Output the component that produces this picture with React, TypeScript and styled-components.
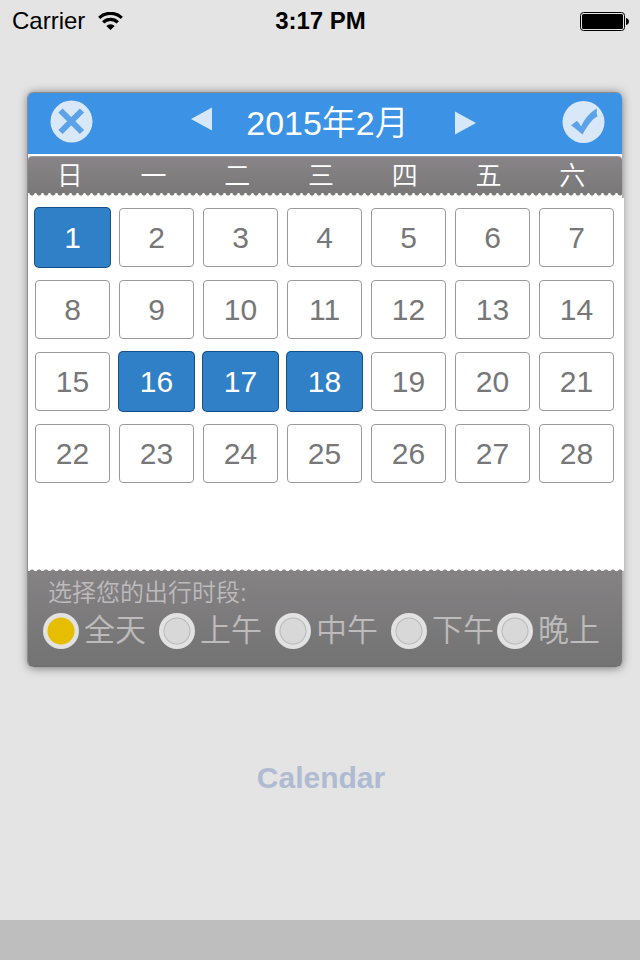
import React, { useState } from "react";
import styled, { createGlobalStyle, css } from "styled-components";

const GlobalStyle = createGlobalStyle`
  *, *::before, *::after { box-sizing: border-box; }
  body {
    margin: 0;
    background: #e4e4e4;
    font-family: "Liberation Sans", "Noto Sans CJK SC", sans-serif;
  }
  button { font: inherit; border: 0; padding: 0; background: none; cursor: pointer; }
`;

const Screen = styled.div`
  display: flex;
  flex-direction: column;
  min-height: 100vh;
`;

const StatusBar = styled.header`
  display: grid;
  grid-template-columns: 1fr auto 1fr;
  align-items: center;
  height: 40px;
  padding: 2px 11px 0 12px;
  font-size: 24px;
  line-height: 28px;
  color: #000;
`;

const Network = styled.div`
  display: flex;
  align-items: center;
  gap: 13px;
`;

const Clock = styled.time`
  font-weight: 700;
`;

const BatteryIcon = styled.svg`
  justify-self: end;
`;

const Main = styled.main`
  flex: 1;
  display: flex;
  flex-direction: column;
  align-items: center;
  padding: 52px 18px 0 28px;
`;

const Card = styled.section`
  width: 100%;
  border-radius: 6px;
  background: #fff;
  border-top: 1px solid #8c8c8c;
  box-shadow: -1px 0 0 #8e8e8c, 0 1px 10px rgba(0, 0, 0, 0.5);
`;

const TitleBar = styled.div`
  display: flex;
  align-items: center;
  justify-content: space-between;
  height: 61px;
  padding: 0 17px 4px 22px;
  border-radius: 5px 5px 0 0;
  background: #3c92e4;
`;

const IconButton = styled.button`
  display: flex;
`;

const MonthNav = styled.div`
  display: flex;
  align-items: center;
  gap: 34px;
  padding-left: 12px;
`;

const NextButton = styled(IconButton)`
  margin-left: 12px;
`;

const Month = styled.h1`
  margin: 0;
  padding-top: 3px;
  font-size: 34px;
  font-weight: 350;
  line-height: 40px;
  color: #fff;
`;

const Weekdays = styled.div`
  display: grid;
  grid-template-columns: repeat(7, 1fr);
  margin-top: 2px;
  padding: 0 8px 0 0;
  height: 37px;
  border-top: 1px solid #a09ea0;
  border-radius: 4px 4px 0 0;
  background: linear-gradient(#888487, #7a7879);
  font-size: 26px;
  font-weight: 350;
  line-height: 38px;
  text-align: center;
  color: #fff;
`;

const LowerScallops = styled.div`
  height: 5px;
  background: radial-gradient(circle at 4px 0, #7a7879 2px, transparent 3px) 0 0 / 7px 3px repeat-x #fcfcfa;
`;

const UpperScallops = styled.div`
  height: 2px;
  background: radial-gradient(circle at 4px 3px, #858284 2px, transparent 3px) 0 0 / 7px 2px repeat-x;
`;

const Body = styled.div`
  margin-right: -2px;
  background: #fff;
`;

const Days = styled.div`
  display: grid;
  grid-template-columns: repeat(7, 1fr);
  gap: 13px 9px;
  padding: 10px 10px 86px 7px;
`;

const Day = styled.button<{ $selected: boolean }>`
  height: 59px;
  border: 1px solid #999;
  border-radius: 4px;
  background: #fff;
  font-size: 30px;
  line-height: 34px;
  color: #777;
  ${(p) =>
    p.$selected &&
    css`
      border-color: #3080c8;
      background: #3080c8;
      box-shadow: 0 0 0 1px #14508c;
      color: #fff;
    `}
`;

const Periods = styled.fieldset`
  margin: 0;
  border: 0;
  min-width: 0;
  padding: 8px 15px 16px;
  border-radius: 0 0 6px 6px;
  background: linear-gradient(#858284, #737373);
  border-bottom: 1px solid #6c6c6c;
  color: #bdbbbc;
  font-weight: 350;
`;

const PeriodsTitle = styled.legend`
  float: left;
  width: 100%;
  padding: 0 0 0 5px;
  font-size: 24px;
  line-height: 28px;
`;

const PeriodList = styled.div`
  clear: both;
  display: grid;
  grid-template-columns: 116fr 116fr 116fr 106fr 110fr;
  padding-top: 5px;
`;

const Period = styled.label`
  display: flex;
  align-items: center;
  gap: 5px;
  height: 38px;
  font-size: 31px;
  line-height: 38px;
  white-space: nowrap;
`;

const Radio = styled.input`
  appearance: none;
  flex: none;
  width: 36px;
  height: 36px;
  margin: 0;
  border-radius: 50%;
  background: radial-gradient(circle, #d8d8d8 12px, #b8b8b8 13px, #e2e2e2 14px);
  &:checked {
    background: radial-gradient(circle, #e6be00 13px, #e2e2e2 14px);
  }
`;

const CalendarButton = styled.button`
  && {
    margin: 93px 8px 0 0;
    font-size: 30px;
    font-weight: 700;
    line-height: 36px;
    color: #afbbd2;
  }
`;

const BottomBar = styled.footer`
  height: 40px;
  background: #bebebe;
`;

const weekdays = ["日", "一", "二", "三", "四", "五", "六"];
const periods = ["全天", "上午", "中午", "下午", "晚上"];
const days = Array.from({ length: 28 }, (_, i) => i + 1);

export default function App() {
  const [selected, setSelected] = useState([1, 16, 17, 18]);
  const [period, setPeriod] = useState(periods[0]);
  const toggle = (day: number) =>
    setSelected((s) => (s.includes(day) ? s.filter((d) => d !== day) : [...s, day]));

  return (
    <Screen>
      <GlobalStyle />
      <StatusBar>
        <Network>
          Carrier
          <svg width="25" height="19" viewBox="0 0 25 19" aria-hidden="true">
            <path d="M1.2 5.8a16.5 16.5 0 0 1 22.6 0M5.2 10.4a10.4 10.4 0 0 1 14.6 0" fill="none" stroke="#000" strokeWidth="3.2" />
            <path d="M8.3 14a6 6 0 0 1 8.4 0L12.5 18z" />
          </svg>
        </Network>
        <Clock>3:17 PM</Clock>
        <BatteryIcon width="49" height="19" viewBox="0 0 49 19" aria-hidden="true">
          <rect x=".5" y=".5" width="44" height="18" rx="3" fill="none" stroke="#000" />
          <rect x="2" y="2" width="41" height="15" rx="1.5" />
          <path d="M46 6c4 1 4 6 0 7z" />
        </BatteryIcon>
      </StatusBar>
      <Main>
        <Card>
          <TitleBar>
            <IconButton aria-label="Cancel">
              <svg width="43" height="43" viewBox="0 0 43 43">
                <circle cx="21.5" cy="21.5" r="21" fill="#d8e8f8" />
                <path d="M10.500 10.500l21.500 21.500M32 10.500L10.500 32" stroke="#5ba2e8" strokeWidth="6" />
              </svg>
            </IconButton>
            <MonthNav>
              <IconButton aria-label="Previous month">
                <svg width="21" height="32" viewBox="0 0 21 32"><path d="M21 1.5v23L0 13z" fill="#d5e7f8" /></svg>
              </IconButton>
              <Month>2015年2月</Month>
              <NextButton aria-label="Next month">
                <svg width="21" height="32" viewBox="0 0 21 32"><path d="M0 5.500v23l21-11.500z" fill="#d5e7f8" /></svg>
              </NextButton>
            </MonthNav>
            <IconButton aria-label="Confirm">
              <svg width="43" height="43" viewBox="0 0 43 43">
                <circle cx="21.5" cy="22" r="21" fill="#d8e8f8" />
                <path d="M9 25.500L14.500 21q2 .5 4.500 5.500C23 18 29 11.500 35 8.500q-1 4 .5 8C30 19 26 25 20.500 34.500 16 31 12 27 9 25.500z" fill="#5ba2e8" />
              </svg>
            </IconButton>
          </TitleBar>
          <Weekdays>
            {weekdays.map((d) => <span key={d}>{d}</span>)}
          </Weekdays>
          <LowerScallops />
          <Body>
            <Days>
              {days.map((d) => (
                <Day key={d} $selected={selected.includes(d)} aria-pressed={selected.includes(d)} onClick={() => toggle(d)}>
                  {d}
                </Day>
              ))}
            </Days>
            <UpperScallops />
          </Body>
          <Periods>
            <PeriodsTitle>选择您的出行时段:</PeriodsTitle>
            <PeriodList>
              {periods.map((p) => (
                <Period key={p}>
                  <Radio type="radio" name="period" checked={period === p} onChange={() => setPeriod(p)} />
                  {p}
                </Period>
              ))}
            </PeriodList>
          </Periods>
        </Card>
        <CalendarButton>Calendar</CalendarButton>
      </Main>
      <BottomBar />
    </Screen>
  );
}
